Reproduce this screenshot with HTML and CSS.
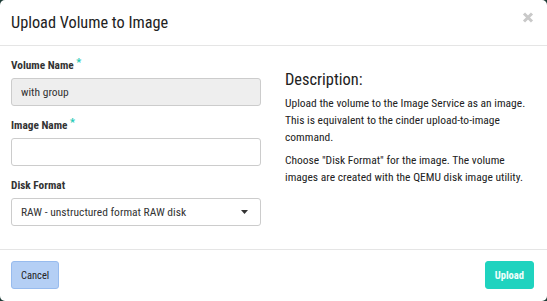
FILE: index.html
```html
<!DOCTYPE html>
<html lang="en">
<head>
<meta charset="UTF-8">
<meta name="viewport" content="width=device-width, initial-scale=1.0">
<title>Upload Volume to Image</title>
<link rel="stylesheet" href="styles.css">
</head>

<body>

<div class="modal">
    <div class="modal-header">
        <h3 class="modal-title">Upload Volume to Image</h3>
        <span class="close-btn" title="Close">
            <svg width="12" height="11" viewBox="0 0 12 11">
                <path d="M2 1.5 L10 9.5 M10 1.5 L2 9.5" stroke="#c9c9c9" stroke-width="3" stroke-linecap="butt"/>
            </svg>
        </span>
    </div>

    <div class="modal-body">
        <div class="left">
            <div class="form-group">
                <label>Volume Name <span class="req">*</span></label>
                <input class="form-control" type="text" value="with group" disabled>
            </div>
            <div class="form-group">
                <label>Image Name <span class="req">*</span></label>
                <input class="form-control" type="text" value="">
            </div>
            <div class="form-group">
                <label>Disk Format</label>
                <div class="form-control select">
                    <span>RAW - unstructured format RAW disk</span>
                    <svg width="7" height="4" viewBox="0 0 7 4"><polygon points="0,0 7,0 3.5,4" fill="#333"/></svg>
                </div>
            </div>
        </div>

        <div class="right">
            <h3>Description:</h3>
            <p>Upload the volume to the Image Service as an image. This is equivalent to the cinder upload-to-image command.</p>
            <p>Choose "Disk Format" for the image. The volume images are created with the QEMU disk image utility.</p>
        </div>
    </div>

    <div class="modal-footer">
        <button class="btn btn-cancel">Cancel</button>
        <button class="btn btn-primary">Upload</button>
    </div>
</div>

</body>
</html>
```

FILE: styles.css
```css
html {
    background-color: #1d3b36;
}

body {
    font-family: "Roboto Condensed", "DejaVu Sans Condensed", sans-serif;
    font-size: 11.5px;
    line-height: 17px;
    color: #222;
    margin: 0;
    overflow: hidden;
}

.modal {
    background: white;
    width: 547px;
    height: 301px;
    border-radius: 5px;
}

.modal-header {
    display: flex;
    justify-content: space-between;
    align-items: flex-start;
    height: 46px;
    box-sizing: border-box;
    padding: 13px 13px 0 11px;
    border-bottom: 1px solid #e5e5e5;
}

.modal-title {
    margin: 0;
    font-size: 16.3px;
    line-height: 20px;
    font-weight: normal;
    color: #222;
}

.close-btn {
    display: block;
    line-height: 0;
    margin-top: -1px;
    cursor: pointer;
}

.modal-body {
    display: flex;
    height: 203px;
    box-sizing: border-box;
    padding: 11px 11px 0 11px;
}

.left {
    width: 250px;
    flex: none;
}

.right {
    flex: 1;
    margin-left: 24px;
}

.form-group {
    margin-bottom: 11px;
}

label {
    display: block;
    height: 17px;
    font-weight: bold;
    font-size: 11.3px;
    color: #333;
    margin-bottom: 4px;
}

.req {
    color: #1fc9b6;
    font-size: 11px;
    line-height: 0;
    vertical-align: 3px;
}

.form-control {
    display: flex;
    align-items: center;
    width: 100%;
    height: 28px;
    box-sizing: border-box;
    padding: 0 12px 0 9px;
    border: 1px solid #ccc;
    border-radius: 3px;
    font-family: inherit;
    font-size: 11.5px;
    color: #333;
    background: white;
    margin: 0;
}

.form-control:disabled {
    background-color: #eee;
    color: #333;
    -webkit-text-fill-color: #333;
    opacity: 1;
}

.select {
    justify-content: space-between;
}

.right h3 {
    margin: 13px 0 5px 0;
    font-size: 16.4px;
    line-height: 20px;
    font-weight: normal;
    color: #222;
}

.right p {
    margin: 0 0 6px 0;
}

.modal-footer {
    display: flex;
    justify-content: space-between;
    padding: 11px 13px 11px 11px;
    border-top: 1px solid #e5e5e5;
}

.btn {
    height: 28px;
    padding: 0 9px;
    font-family: inherit;
    font-size: 10.5px;
    border-radius: 3px;
    cursor: pointer;
}

.btn-cancel {
    background-color: #b4cff5;
    border: 1px solid #97bbee;
    color: #222;
}

.btn-primary {
    background-color: #1fd3bf;
    border: 1px solid #1fd3bf;
    color: #effffc;
    font-weight: bold;
}
```
